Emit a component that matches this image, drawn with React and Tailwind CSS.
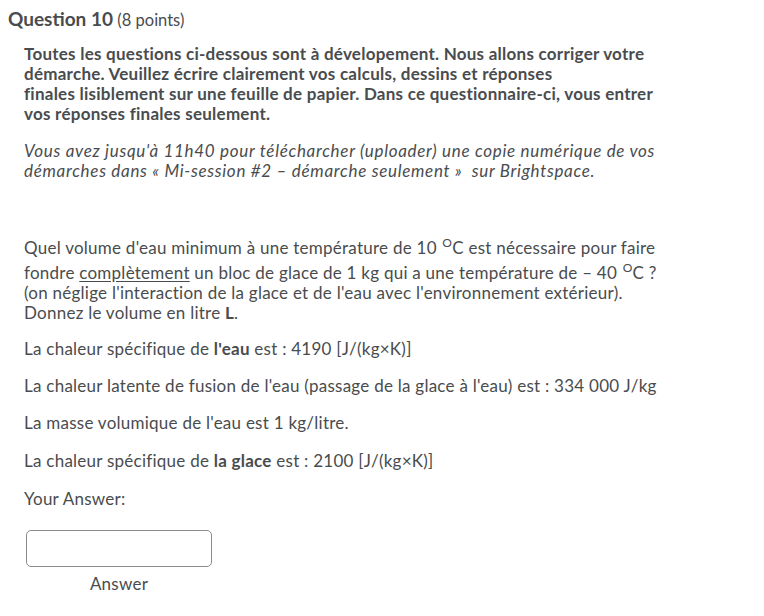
import React from "react";

const Deg = () => (
  <span className="relative -top-[7px] ml-[1px] text-[12px] leading-none">O</span>
);

export default function App() {
  return (
    <div className="w-[764px] h-[616px] bg-white text-[#494c4e] font-['Lato',sans-serif] text-[17px] tracking-[0.25px]">
      <div className="pl-2 pt-[7px] leading-[24px] tracking-normal">
        <span className="text-[19px] font-bold">Question 10</span>{" "}
        <span className="text-[16.5px]">(8 points)</span>
      </div>

      <div className="pl-6 pt-[12px]">
        <p className="font-bold leading-[20px]">
          Toutes les questions ci-dessous sont à dévelopement. Nous allons corriger votre
          <br />
          démarche. Veuillez écrire clairement vos calculs, dessins et réponses
          <br />
          finales lisiblement sur une feuille de papier. Dans ce questionnaire-ci, vous entrer
          <br />
          vos réponses finales seulement.
        </p>

        <p className="italic leading-[20px] mt-[17px] tracking-[0.7px]">
          Vous avez jusqu'à 11h40 pour télécharcher (uploader) une copie numérique de vos
          <br />
          démarches dans « Mi-session #2 – démarche seulement »&nbsp; sur Brightspace.
        </p>

        <div className="mt-[57px] leading-[20px]">
          <div>
            Quel volume d'eau minimum à une température de 10 <Deg />C est nécessaire pour faire
          </div>
          <div className="pt-[5px]">
            fondre <span className="underline underline-offset-2">complètement</span> un bloc de glace de 1 kg qui a une température de – 40 <Deg />C ?
          </div>
          <div>(on néglige l'interaction de la glace et de l'eau avec l'environnement extérieur).</div>
          <div>
            Donnez le volume en litre <span className="font-bold">L</span>.
          </div>
        </div>

        <p className="mt-[16px] leading-[20px]">
          La chaleur spécifique de <span className="font-bold">l'eau</span> est : 4190 [J/(kg×K)]
        </p>
        <p className="mt-[17px] leading-[20px]">
          La chaleur latente de fusion de l'eau (passage de la glace à l'eau) est : 334 000 J/kg
        </p>
        <p className="mt-[17px] leading-[20px]">La masse volumique de l'eau est 1 kg/litre.</p>
        <p className="mt-[18px] leading-[20px]">
          La chaleur spécifique de <span className="font-bold">la glace</span> est : 2100 [J/(kg×K)]
        </p>
        <p className="mt-[18px] leading-[20px]">Your Answer:</p>

        <div className="mt-[21px] ml-[2px] w-[186px] flex flex-col items-center">
          <div className="w-[186px] h-[37px] border border-[#8a8d8f] rounded-[5px] bg-white" />
          <div className="mt-[7px] leading-[20px]">Answer</div>
        </div>
      </div>
    </div>
  );
}
